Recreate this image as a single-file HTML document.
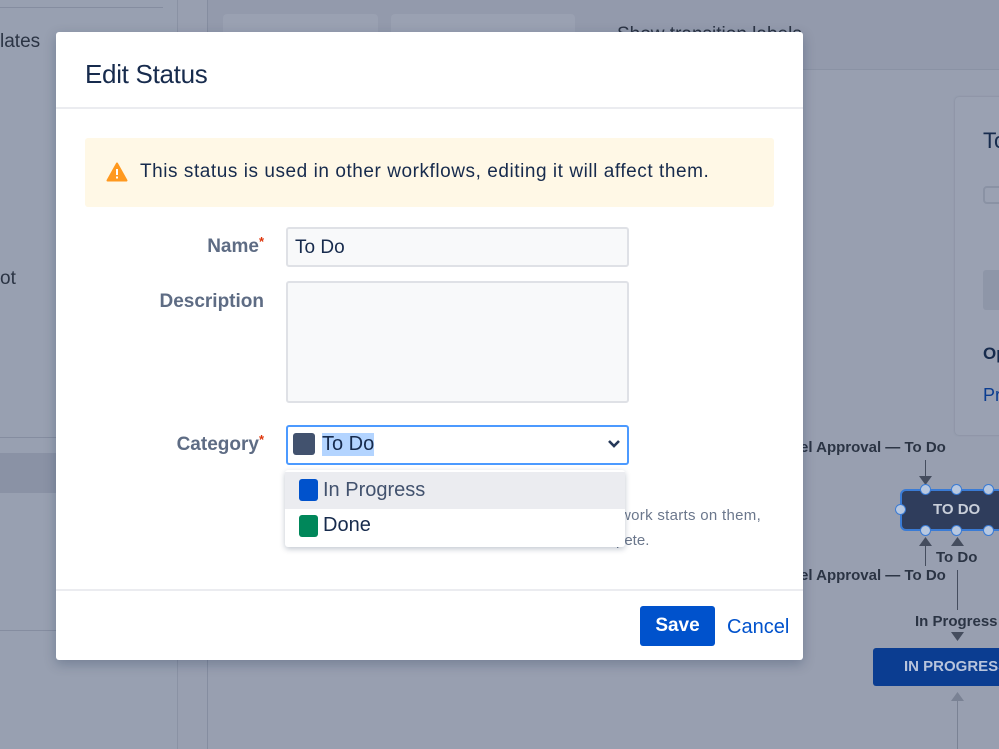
<!DOCTYPE html>
<html><head><meta charset="utf-8"><style>
*{box-sizing:border-box;margin:0;padding:0}
body{width:999px;height:749px;overflow:hidden;position:relative;background:#989fb0;font-family:"Liberation Sans",sans-serif;color:#172b4d}
.a{position:absolute}
.lbl{position:absolute;font-size:19px;color:#5e6c84;text-align:right;width:200px;font-weight:bold;}
.g{color:#2b3444;font-weight:bold;font-size:15px}
.dot{position:absolute;width:11px;height:11px;border-radius:50%;background:#b8c8e0;border:1.5px solid #3a7bd5}
</style></head><body>
<div class="a" style="left:0;top:0;width:178px;height:749px;background:#98a0b1;border-right:1px solid #8a92a4"></div>
<div class="a" style="left:0;top:7px;width:163px;height:1px;background:#858da0"></div>
<div class="a" style="left:0;top:31px;font-size:19px;color:#2b3444">lates</div>
<div class="a" style="left:0;top:268px;font-size:19px;color:#2b3444">ot</div>
<div class="a" style="left:0;top:437px;width:178px;height:1px;background:#858da0"></div>
<div class="a" style="left:0;top:453px;width:178px;height:40px;background:#8a92a5"></div>
<div class="a" style="left:0;top:630px;width:178px;height:1px;background:#858da0"></div>
<div class="a" style="left:207px;top:0;width:1px;height:749px;background:#858da0"></div>
<div class="a" style="left:208px;top:0;width:791px;height:70px;background:#939aac;border-bottom:1px solid #8a92a4"></div>
<div class="a" style="left:223px;top:14px;width:155px;height:40px;background:#9aa1b2;border-radius:4px"></div>
<div class="a" style="left:391px;top:14px;width:184px;height:40px;background:#9aa1b2;border-radius:4px"></div>
<div class="a" style="left:617px;top:24px;font-size:19px;color:#2b3444">Show transition labels</div>
<div class="a" style="left:955px;top:97px;width:60px;height:338px;background:#9aa1b2;border-radius:4px;box-shadow:0 0 2px #7f8799"></div>
<div class="a" style="left:983px;top:128px;font-size:22px;color:#172b4d">To</div>
<div class="a" style="left:983px;top:186px;width:20px;height:18px;border:2px solid #8a92a4;border-radius:4px"></div>
<div class="a" style="left:983px;top:270px;width:20px;height:40px;background:#8e96a8;border-radius:3px"></div>
<div class="a" style="left:983px;top:344px;font-size:17px;font-weight:bold;color:#172b4d">Op</div>
<div class="a" style="left:983px;top:385px;font-size:18px;color:#0b3d91">Pr</div>
<div class="a g" style="left:800px;top:439px">el Approval — To Do</div>
<div class="a" style="left:925px;top:460px;width:1px;height:18px;background:#454d5e"></div>
<svg class="a" style="left:919px;top:476px" width="13" height="9"><path d="M0 0h13L6.5 9z" fill="#454d5e"/></svg>
<div class="a" style="left:900px;top:489px;width:110px;height:42px;background:#2f3d5c;border:2px solid #3a7bd5;border-radius:6px;color:#c9cfda;font-weight:bold;font-size:15px;line-height:38px;padding-left:31px">TO DO</div>
<div class="dot" style="left:920px;top:484px"></div><div class="dot" style="left:951px;top:484px"></div><div class="dot" style="left:983px;top:484px"></div>
<div class="dot" style="left:920px;top:525px"></div><div class="dot" style="left:951px;top:525px"></div><div class="dot" style="left:983px;top:525px"></div>
<div class="dot" style="left:895px;top:504px"></div>
<svg class="a" style="left:919px;top:537px" width="13" height="9"><path d="M0 9h13L6.5 0z" fill="#454d5e"/></svg>
<svg class="a" style="left:951px;top:537px" width="13" height="9"><path d="M0 9h13L6.5 0z" fill="#454d5e"/></svg>
<div class="a" style="left:925px;top:546px;width:1px;height:20px;background:#454d5e"></div>
<div class="a g" style="left:936px;top:549px">To Do</div>
<div class="a g" style="left:800px;top:567px">el Approval — To Do</div>
<div class="a" style="left:957px;top:570px;width:1px;height:40px;background:#454d5e"></div>
<div class="a g" style="left:915px;top:613px">In Progress</div>
<svg class="a" style="left:951px;top:632px" width="13" height="9"><path d="M0 0h13L6.5 9z" fill="#454d5e"/></svg>
<div class="a" style="left:873px;top:648px;width:140px;height:38px;background:#0b3d91;border-radius:3px;color:#b8c4dc;font-weight:bold;font-size:15px;line-height:38px;padding-left:31px">IN PROGRESS</div>
<svg class="a" style="left:951px;top:692px" width="13" height="9"><path d="M0 9h13L6.5 0z" fill="#7a8294"/></svg>
<div class="a" style="left:957px;top:700px;width:1px;height:49px;background:#7a8294"></div>
<!-- modal -->
<div class="a" style="left:56px;top:32px;width:747px;height:628px;background:#fff;border-radius:3px;box-shadow:0 4px 12px rgba(9,30,66,.25)"></div>
<div class="a" style="left:85px;top:59px;font-size:26px;color:#172b4d;letter-spacing:-0.3px">Edit Status</div>
<div class="a" style="left:56px;top:107px;width:747px;height:2px;background:#ebecf0"></div>
<div class="a" style="left:85px;top:138px;width:689px;height:69px;background:#fff8e6;border-radius:3px"></div>
<svg class="a" style="left:106px;top:162px" width="22" height="20" viewBox="0 0 22 20"><path d="M11 1.5L20.5 18.5H1.5Z" fill="#ff991f" stroke="#ff991f" stroke-width="2" stroke-linejoin="round"/><rect x="10" y="7" width="2" height="6" fill="#fff"/><rect x="10" y="14.5" width="2" height="2" fill="#fff"/></svg>
<div class="a" style="left:140px;top:161px;font-size:19px;color:#172b4d;letter-spacing:0.55px">This status is used in other workflows, editing it will affect them.</div>
<div class="lbl" style="left:64px;top:236px">Name<span style="color:#de350b;font-size:13px;vertical-align:top;position:relative;top:-2px">*</span></div>
<div class="a" style="left:286px;top:227px;width:343px;height:40px;background:#f8f9fa;border:2px solid #dfe1e6;border-radius:3px;font-size:19px;padding:8px 0 0 7px">To Do</div>
<div class="lbl" style="left:64px;top:291px;width:200px">Description</div>
<div class="a" style="left:286px;top:281px;width:343px;height:122px;background:#f8f9fa;border:2px solid #dfe1e6;border-radius:3px"></div>
<div class="lbl" style="left:64px;top:434px">Category<span style="color:#de350b;font-size:13px;vertical-align:top;position:relative;top:-2px">*</span></div>
<div class="a" style="left:286px;top:425px;width:343px;height:40px;background:#fff;border:2px solid #4c9aff;border-radius:3px"></div>
<div class="a" style="left:293px;top:433px;width:22px;height:22px;background:#42526e;border-radius:3px"></div>
<div class="a" style="left:322px;top:433px;height:23px;background:#b3d4ff;font-size:20px;line-height:23px;color:#172b4d">To Do</div>
<svg class="a" style="left:607px;top:438px" width="14" height="12" viewBox="0 0 14 12"><path d="M2 3l5 5 5-5" fill="none" stroke="#253858" stroke-width="2.6"/></svg>
<div class="a" style="left:620px;top:502px;font-size:15px;color:#6b778c;line-height:28px;letter-spacing:0.3px">work starts on them,</div>
<div class="a" style="left:616px;top:532px;font-size:15px;color:#6b778c">pete.</div>
<div class="a" style="left:285px;top:470px;width:340px;height:77px;background:#fff;border-radius:3px;box-shadow:0 2px 6px rgba(9,30,66,.25);overflow:hidden">
<div style="height:37px;background:#ebecf0;position:relative;top:2px"><div class="a" style="left:14px;top:7px;width:19px;height:22px;background:#0052cc;border-radius:3px"></div><div class="a" style="left:38px;top:7px;font-size:20px;color:#42526e">In Progress</div></div>
<div style="position:relative;height:38px;top:2px"><div class="a" style="left:14px;top:6px;width:19px;height:22px;background:#00875a;border-radius:3px"></div><div class="a" style="left:38px;top:5px;font-size:20px;color:#172b4d">Done</div></div>
</div>
<div class="a" style="left:56px;top:589px;width:747px;height:2px;background:#ebecf0"></div>
<div class="a" style="left:640px;top:606px;width:75px;height:40px;background:#0052cc;border-radius:3px;color:#fff;font-weight:bold;font-size:19px;text-align:center;line-height:40px">Save</div>
<div class="a" style="left:727px;top:616px;font-size:20px;color:#0052cc">Cancel</div>
</body></html>
